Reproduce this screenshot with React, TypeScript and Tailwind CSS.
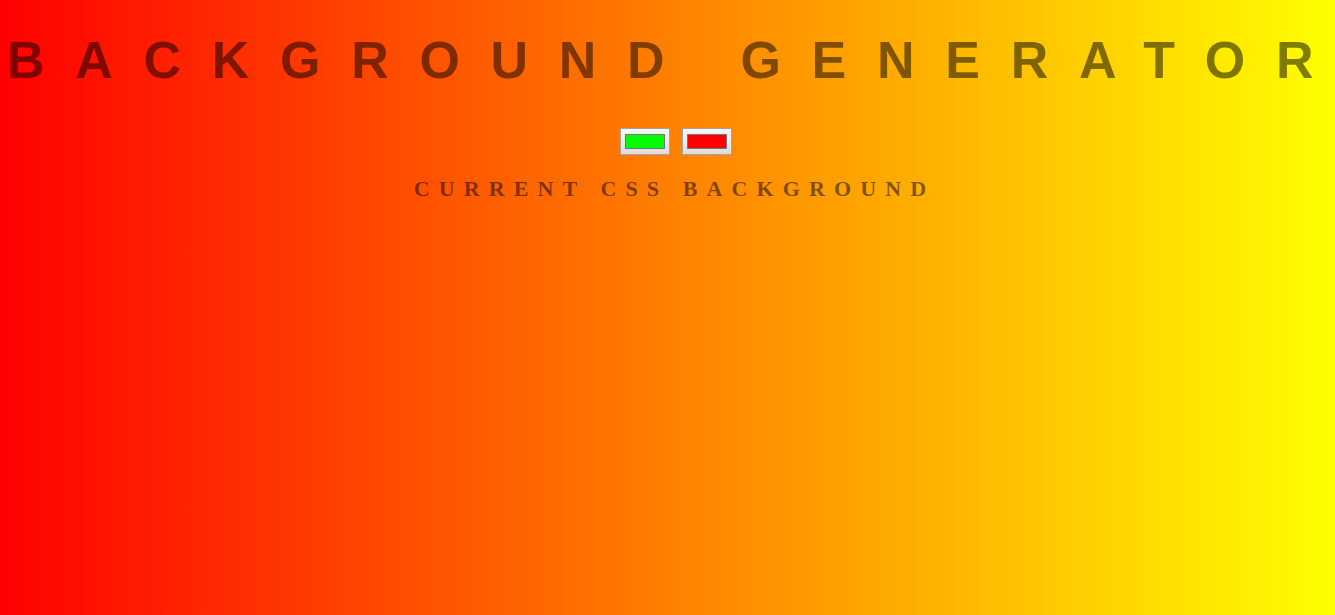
import React from "react";

function ColorSwatch({ color }: { color: string }) {
  return (
    <div className="w-[50px] h-[27px] border border-[#a3a3a3] bg-[linear-gradient(to_bottom,#f7f7f7,#dddddd)] flex items-center justify-center">
      <div className="w-[40px] h-[15px] border border-[#777777]" style={{ backgroundColor: color }} />
    </div>
  );
}

export default function App() {
  return (
    <div className="min-h-screen w-full bg-[linear-gradient(to_right,#ff0000,#ffff00)] overflow-hidden">
      {/* last letter has no tracking so the line doesn't spill past the edge */}
      <h1 className="pt-[30px] pl-[7px] text-left text-[52px] leading-[60px] font-bold tracking-[30.7px] text-black/50 whitespace-nowrap font-['Liberation_Sans',Arial,sans-serif]">
        BACKGROUND GENERATO<span className="tracking-normal">R</span>
      </h1>

      <div className="mt-[38px] flex justify-center gap-[12px] pl-[16px]">
        <ColorSwatch color="#00ff00" />
        <ColorSwatch color="#ff0000" />
      </div>

      <h3 className="mt-[21px] pl-[14px] text-center text-[22px] leading-[25px] font-bold tracking-[9.1px] text-black/50 font-['Liberation_Serif','Times_New_Roman',serif]">
        CURRENT CSS BACKGROUND
      </h3>
    </div>
  );
}
